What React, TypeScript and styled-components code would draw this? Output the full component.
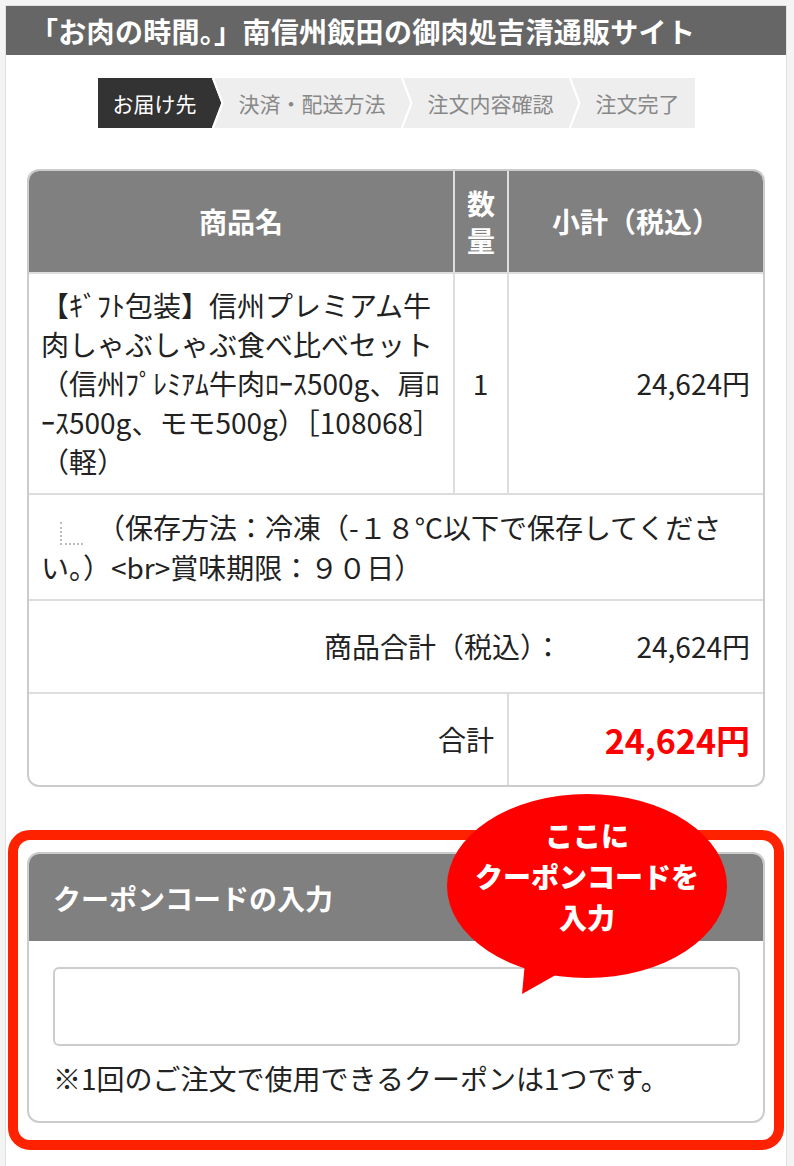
import React from "react";
import styled, { createGlobalStyle } from "styled-components";

const GlobalStyle = createGlobalStyle`
  html, body {
    margin: 0;
    padding: 0;
    background: #f4f4f4;
  }
  body {
    font-family: "Noto Sans CJK JP", "Noto Sans", sans-serif;
    color: #222;
  }
  * { box-sizing: border-box; }
`;

const Page = styled.div`
  margin: 5px 0 0 5px;
  width: 782px;
  min-height: 1161px;
  background: #fff;
  border: 1px solid #e2e2e2;
  border-bottom: none;
  padding-bottom: 24px;
`;

const SiteHeader = styled.h1`
  margin: 0;
  height: 49px;
  display: flex;
  align-items: center;
  padding-left: 24px;
  background: #666;
  color: #fff;
  font-size: 28px;
  font-weight: 700;
  letter-spacing: 0.3px;
  white-space: nowrap;
`;

/* ---------- order steps ---------- */

const Steps = styled.ol`
  list-style: none;
  margin: 23px auto 0;
  padding: 0;
  width: fit-content;
  height: 50px;
  display: flex;
  background: #eee;
`;

const Step = styled.li<{ $active?: boolean }>`
  display: flex;
  align-items: center;
  padding: 0 15px;
  font-size: 21px;
  white-space: nowrap;
  color: ${(p) => (p.$active ? "#fff" : "#888")};
  background: ${(p) => (p.$active ? "#333" : "transparent")};
`;

const ChevronSvg = styled.svg`
  display: block;
  flex: none;
`;

const Chevron = ({ active }: { active?: boolean }) => (
  <ChevronSvg width="12" height="50" viewBox="0 0 12 50">
    {active && <polygon points="0,0 9.5,25 0,50" fill="#333" />}
    <polyline points="0.5,-1 10.5,25 0.5,51" fill="none" stroke="#fff" strokeWidth="2.2" />
  </ChevronSvg>
);

/* ---------- cart table ---------- */

const Card = styled.div`
  width: 738px;
  margin: 41px auto 0;
  border: 2px solid #ccc;
  border-radius: 12px;
  overflow: hidden;
`;

const Grid = styled.div`
  display: grid;
  grid-template-columns: 426px 54px 1fr;
`;

type CellProps = {
  $align?: "left" | "center" | "right";
  $span?: number;
  $last?: boolean;
  $bottom?: boolean;
};

const Cell = styled.div<CellProps>`
  grid-column: span ${(p) => p.$span ?? 1};
  display: flex;
  align-items: center;
  justify-content: ${(p) =>
    p.$align === "center" ? "center" : p.$align === "right" ? "flex-end" : "flex-start"};
  padding: 12px 13px 12px 12px;
  font-size: 28px;
  line-height: 39px;
  border-right: ${(p) => (p.$last ? "none" : "2px solid #ddd")};
  border-bottom: ${(p) => (p.$bottom ? "none" : "2px solid #ddd")};
`;

const HeadCell = styled(Cell)`
  height: 103px;
  padding: 0;
  background: #808080;
  color: #fff;
  font-weight: 700;
  line-height: 37px;
  text-align: center;
`;

const ProductName = styled.div`
  white-space: nowrap;
`;

const SummaryCell = styled(Cell)`
  padding-top: 26px;
  padding-bottom: 26px;
`;

const Note = styled.div`
  white-space: nowrap;
  line-height: 40px;
`;

const TreeMark = styled.span`
  display: inline-block;
  width: 23px;
  height: 23px;
  margin: 0 14px 0 19px;
  vertical-align: -6px;
  border-left: 2px dotted #bbb;
  border-bottom: 2px dotted #bbb;
`;

const SubtotalValue = styled.span`
  display: inline-block;
  width: 188px;
  text-align: right;
`;

const TotalPrice = styled.span`
  color: #f00;
  font-size: 34px;
  font-weight: 700;
`;

/* ---------- coupon ---------- */

const RedFrame = styled.section`
  position: relative;
  width: 776px;
  margin: 43px auto 0;
  border: 10px solid #ff2200;
  border-radius: 22px;
  padding: 12px 9px 17px;
`;

const CouponCard = styled.div`
  border: 2px solid #ccc;
  border-radius: 12px;
  overflow: hidden;
`;

const CouponTitle = styled.h2`
  margin: 0;
  height: 87px;
  display: flex;
  align-items: center;
  padding-left: 24px;
  background: #808080;
  color: #fff;
  font-size: 28px;
  font-weight: 700;
`;

const CouponBody = styled.div`
  padding: 26px 23px 23px 24px;
`;

const CodeInput = styled.input`
  display: block;
  width: 100%;
  height: 79px;
  border: 2px solid #ccc;
  border-radius: 6px;
  font-size: 28px;
  padding: 0 14px;
  outline: none;
`;

const CouponNote = styled.p`
  margin: 13px 0 0;
  font-size: 28px;
  line-height: 39px;
  white-space: nowrap;
`;

const Bubble = styled.div`
  position: absolute;
  left: 429px;
  top: -46px;
  width: 280px;
  height: 200px;
  z-index: 2;
`;

const BubbleShape = styled.svg`
  position: absolute;
  inset: 0;
`;

const BubbleText = styled.div`
  position: relative;
  padding-top: 21px;
  text-align: center;
  color: #fff;
  font-size: 28px;
  font-weight: 900;
  line-height: 41px;
`;

export default function App() {
  return (
    <>
      <GlobalStyle />
      <Page>
        <SiteHeader>「お肉の時間。」南信州飯田の御肉処吉清通販サイト</SiteHeader>

        <Steps>
          <Step $active>お届け先</Step>
          <Chevron active />
          <Step>決済・配送方法</Step>
          <Chevron />
          <Step>注文内容確認</Step>
          <Chevron />
          <Step>注文完了</Step>
        </Steps>

        <Card>
          <Grid>
            <HeadCell $align="center">商品名</HeadCell>
            <HeadCell $align="center">
              数<br />量
            </HeadCell>
            <HeadCell $align="center" $last>
              小計（税込）
            </HeadCell>

            <Cell>
              <ProductName>
                【ｷﾞﾌﾄ包装】信州プレミアム牛
                <br />
                肉しゃぶしゃぶ食べ比べセット
                <br />
                （信州ﾌﾟﾚﾐｱﾑ牛肉ﾛｰｽ500g、肩ﾛ
                <br />
                ｰｽ500g、モモ500g）［108068］
                <br />
                （軽）
              </ProductName>
            </Cell>
            <Cell $align="center">1</Cell>
            <Cell $align="right" $last>
              24,624円
            </Cell>

            <Cell $span={3} $last>
              <Note>
                <TreeMark />
                （保存方法：冷凍（-１８°C以下で保存してくださ
                <br />
                い。）{"<br>"}賞味期限：９０日）
              </Note>
            </Cell>

            <SummaryCell $span={3} $align="right" $last>
              商品合計（税込）：<SubtotalValue>24,624円</SubtotalValue>
            </SummaryCell>

            <SummaryCell $span={2} $align="right" $bottom>
              合計
            </SummaryCell>
            <SummaryCell $align="right" $last $bottom>
              <TotalPrice>24,624円</TotalPrice>
            </SummaryCell>
          </Grid>
        </Card>

        <RedFrame>
          <CouponCard>
            <CouponTitle>クーポンコードの入力</CouponTitle>
            <CouponBody>
              <CodeInput type="text" aria-label="クーポンコード" />
              <CouponNote>※1回のご注文で使用できるクーポンは1つです。</CouponNote>
            </CouponBody>
          </CouponCard>

          <Bubble>
            <BubbleShape width="280" height="200" viewBox="0 0 280 200">
              <ellipse cx="140" cy="92" rx="140" ry="92" fill="#ff0000" />
              <polygon points="78,168 75,200 114,178" fill="#ff0000" />
            </BubbleShape>
            <BubbleText>
              ここに
              <br />
              クーポンコードを
              <br />
              入力
            </BubbleText>
          </Bubble>
        </RedFrame>
      </Page>
    </>
  );
}
